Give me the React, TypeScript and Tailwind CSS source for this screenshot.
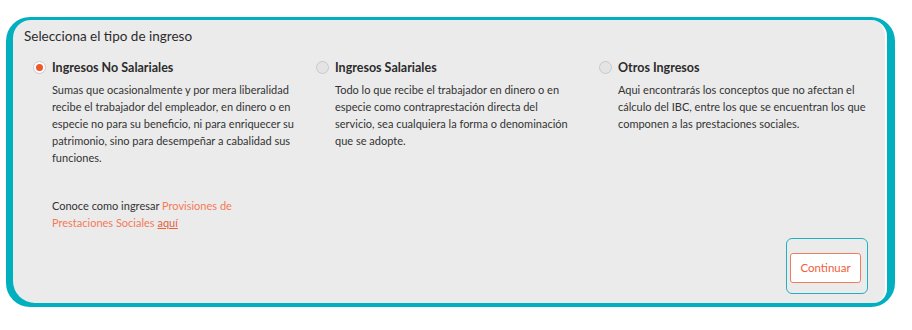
import React from "react";

function Radio({ checked }: { checked?: boolean }) {
  return (
    <span
      className={
        "flex h-[13px] w-[13px] shrink-0 items-center justify-center rounded-full border border-[#c9c9c9] " +
        (checked ? "bg-white" : "bg-[#e4e4e4]")
      }
    >
      {checked && <span className="h-[7px] w-[7px] rounded-full bg-[#f0552b]" />}
    </span>
  );
}

function Option({
  title,
  text,
  checked,
  width,
  children,
}: {
  title: string;
  text: string;
  checked?: boolean;
  width: string;
  children?: React.ReactNode;
}) {
  return (
    <div className="flex flex-col">
      <div className="flex items-center gap-[6px] h-[17px]">
        <Radio checked={checked} />
        <span className="text-[12.5px] font-bold text-[#2b2b2b] leading-[17px]">{title}</span>
      </div>
      <p className={"ml-[19px] mt-[5px] text-[11px] leading-[17px] text-[#333333] " + width}>{text}</p>
      {children}
    </div>
  );
}

export default function App() {
  return (
    <div
      className="w-[912px] h-[330px] bg-white pt-[17px] pl-[6px]"
      style={{ fontFamily: "Lato, 'Noto Sans', sans-serif" }}
    >
      <div className="w-[889px] h-[290px] rounded-[24px] bg-[#00b0bf] pt-[3px] pl-[7px] pr-[8px] pb-[4px]">
        <div className="flex h-full flex-col rounded-tl-[18px] rounded-tr-[16px] rounded-bl-[22px] rounded-br-[14px] border-r-[2px] border-white bg-[#ebebeb] pl-[11px] pt-[7px]">
          <h2 className="text-[13.5px] leading-[18px] text-[#2b2b2b]">Selecciona el tipo de ingreso</h2>
          <div className="mt-[14px] ml-[9px] grid grid-cols-[283px_283px_283px]">
            <Option
              checked
              width="w-[246px]"
              title="Ingresos No Salariales"
              text="Sumas que ocasionalmente y por mera liberalidad recibe el trabajador del empleador, en dinero o en especie no para su beneficio, ni para enriquecer su patrimonio, sino para desempeñar a cabalidad sus funciones."
            >
              <p className="ml-[19px] mt-[31px] w-[220px] text-[11px] leading-[17px] text-[#333333]">
                Conoce como ingresar <span className="text-[#f47a57]">Provisiones de</span>
                <br />
                <span className="text-[#f47a57]">Prestaciones Sociales</span>{" "}
                <a className="underline text-[#e8603c]">aquí</a>
              </p>
            </Option>
            <Option
              width="w-[238px]"
              title="Ingresos Salariales"
              text="Todo lo que recibe el trabajador en dinero o en especie como contraprestación directa del servicio, sea cualquiera la forma o denominación que se adopte."
            />
            <Option
              width="w-[252px]"
              title="Otros Ingresos"
              text="Aqui encontrarás los conceptos que no afectan el cálculo del IBC, entre los que se encuentran los que componen a las prestaciones sociales."
            />
          </div>
          <div className="mt-auto mb-[9px] mr-[17px] flex justify-end">
            <div className="flex h-[56px] w-[82px] rounded-[6px] border border-[#1fb3c2] pl-[3px] pt-[14px]">
              <button className="h-[30px] w-[71px] rounded-[3px] border border-[#f07c5e] bg-white text-[11.5px] text-[#f0603a]">
                Continuar
              </button>
            </div>
          </div>
        </div>
      </div>
    </div>
  );
}
